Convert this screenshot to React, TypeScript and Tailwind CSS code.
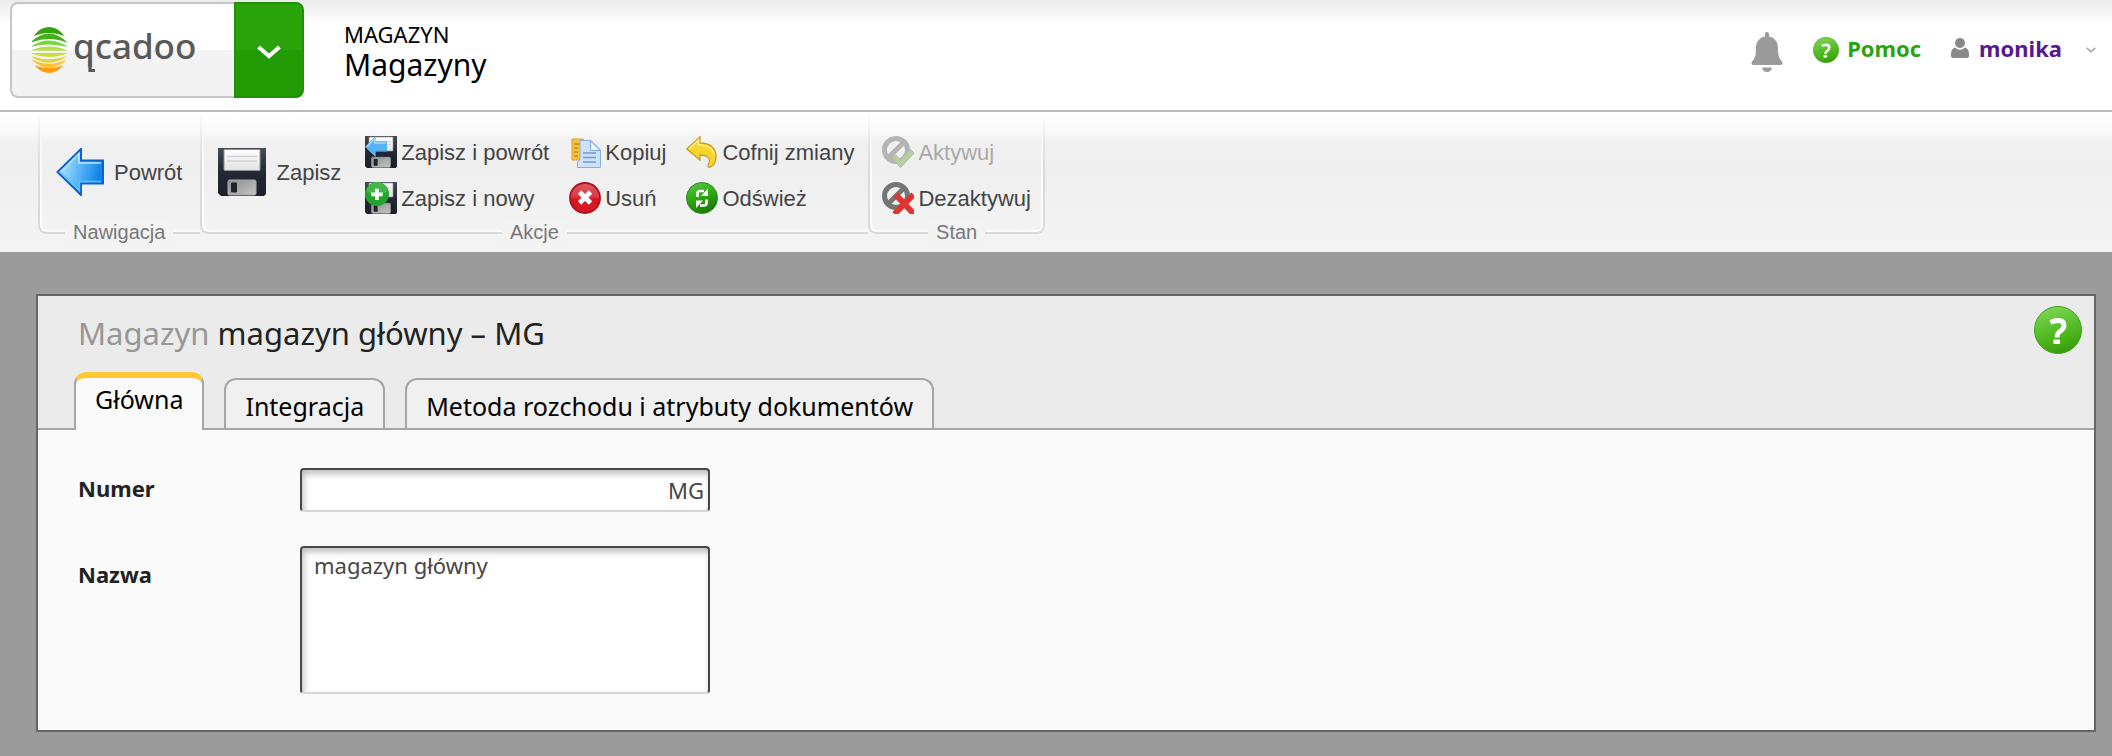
import React from "react";

function LogoMark() {
  return (
    <svg width="176" height="56" viewBox="0 -4 176 56" role="img" aria-label="qcadoo">
      <defs>
        <clipPath id="logo-ball">
          <ellipse cx="17" cy="24" rx="19" ry="23" />
        </clipPath>
      </defs>
      <g clipPath="url(#logo-ball)">
        <path d="M-2 12Q17 -11 36 12Q17 2 -2 12Z" fill="#33a50c" />
        <path d="M-2 17Q17 -2 36 17Q17 9 -2 17Z" fill="#45b01c" />
        <path d="M-2 21Q17 8 36 21Q17 16 -2 21Z" fill="#74d83a" />
        <path d="M-2 24.500Q17 16.500 36 24.500Q17 25 -2 24.500Z" fill="#b5e04a" />
        <path d="M-2 27Q17 27 36 27Q17 35 -2 27Z" fill="#c9dc3e" />
        <path d="M-2 29.500Q17 37 36 29.500Q17 44 -2 29.500Z" fill="#dcd53c" />
        <path d="M-2 32.500Q17 43 36 32.500Q17 51 -2 32.500Z" fill="#ffc02e" />
        <path d="M-2 37Q17 47 36 37Q17 61 -2 37Z" fill="#ff9a12" />
      </g>
      <text x="41" y="33" fontFamily="'Noto Sans', sans-serif" fontSize="35" fontWeight="500" fill="#595959">qcadoo</text>
      <path d="M58 34V44.500H63" fill="none" stroke="#595959" strokeWidth="3.200" />
    </svg>
  );
}

function HelpIcon({ className }: { className: string }) {
  return (
    <svg className={className} viewBox="0 0 48 48" aria-hidden="true">
      <defs>
        <linearGradient id="help-fill" x1="0.3" y1="0" x2="0.6" y2="1">
          <stop offset="0" stopColor="#7fd455" />
          <stop offset="0.5" stopColor="#55bd28" />
          <stop offset="0.75" stopColor="#46b014" />
          <stop offset="1" stopColor="#37990c" />
        </linearGradient>
      </defs>
      <circle cx="24" cy="24" r="23.500" fill="url(#help-fill)" stroke="#41a31b" />
      <path d="M16.500 16.500Q20 14.500 24 14.500Q30 14.500 30 19.500Q30 22.500 26.500 25Q23 27 23 31.500" fill="none" stroke="#fff" strokeWidth="4.800" />
      <rect x="19.500" y="33.500" width="6.500" height="4.500" fill="#fff" />
    </svg>
  );
}

function BellIcon() {
  return (
    <svg width="32" height="40" viewBox="0 0 32 40" aria-hidden="true" fill="#9b9b9b">
      <path d="M16 0C17.500 0 18 1 18 2.500V4.600C23.500 5.500 27 10 27 15.500C27 24 28 26 31 29.500C32 31.500 31.500 33 29.500 33H2.500C.5 33 0 31.500 1 29.500C4 26 5 24 5 15.500C5 10 8.500 5.500 14 4.600V2.500C14 1 14.500 0 16 0Z" />
      <path d="M11 35.500H21C20.500 38.500 18.500 40 16 40C13.500 40 11.500 38.500 11 35.500Z" />
    </svg>
  );
}

function UserIcon() {
  return (
    <svg width="18" height="20" viewBox="0 0 18 20" aria-hidden="true" fill="#888">
      <circle cx="9" cy="5" r="5" />
      <path d="M4 9.500Q9 14 14 9.500Q18 11 18 16V18Q18 20 16 20H2Q0 20 0 18V16Q0 11 4 9.500Z" />
    </svg>
  );
}

function BackIcon() {
  return (
    <svg width="48" height="48" viewBox="0 0 48 48" aria-hidden="true">
      <defs>
        <linearGradient id="back-fill" x1="0" y1="0" x2="1" y2="0.25">
          <stop offset="0" stopColor="#d5f3ff" />
          <stop offset="0.5" stopColor="#63bcf8" />
          <stop offset="1" stopColor="#1183ea" />
        </linearGradient>
      </defs>
      <path d="M1.500 24L25 1V12.500H47V35.500H25V47Z" fill="url(#back-fill)" stroke="#0b62d8" strokeWidth="2" />
      <path d="M4.500 24L23 5.500V15H45" fill="none" stroke="#c3eaff" strokeWidth="1.500" />
      <path d="M4.500 24L23.500 42.500V33.500H45" fill="none" stroke="#5cc6fb" strokeWidth="1.300" />
    </svg>
  );
}

function Floppy({ size, children }: { size: "large" | "small"; children?: React.ReactNode }) {
  return (
    <svg className={size === "large" ? "size-12" : "size-8"} viewBox="0 0 48 48" aria-hidden="true">
      <defs>
        <linearGradient id="disk-body" x1="0" y1="0" x2="0" y2="1">
          <stop offset="0" stopColor="#454a55" />
          <stop offset="0.5" stopColor="#232833" />
          <stop offset="1" stopColor="#1c202a" />
        </linearGradient>
        <linearGradient id="disk-label" x1="0" y1="0" x2="0" y2="1">
          <stop offset="0" stopColor="#ffffff" />
          <stop offset="1" stopColor="#e2e2e2" />
        </linearGradient>
        <linearGradient id="disk-metal" x1="0" y1="0" x2="1" y2="1">
          <stop offset="0" stopColor="#8e8e8e" />
          <stop offset="1" stopColor="#c4c4c4" />
        </linearGradient>
      </defs>
      <path d="M0 0H48V46L46 48H3L0 45Z" fill="url(#disk-body)" />
      <rect x="6" y="1.500" width="36" height="21" rx="1" fill="url(#disk-label)" stroke="#8f949c" />
      <path d="M9 8.500H39M9 13H39" stroke="#d2d2d2" strokeWidth="1.500" />
      <rect x="10" y="32" width="28" height="15" rx="1.500" fill="url(#disk-metal)" stroke="#a9a9a9" />
      <rect x="13" y="34.500" width="6" height="10" rx="1" fill="#1f242d" />
      {children}
    </svg>
  );
}

function SaveBackIcon() {
  return (
    <Floppy size="small">
      <path d="M0 16L16 0V8H33V24H16V32Z" fill="#56b4f3" />
      <path d="M3 16L14.500 4V10.500H31" fill="none" stroke="#a4dcfb" strokeWidth="2" />
      <path d="M16 23H33" stroke="#2a86d8" strokeWidth="2" />
    </Floppy>
  );
}

function SaveNewIcon() {
  return (
    <Floppy size="small">
      <circle cx="18" cy="18" r="18" fill="#22a32c" />
      <path d="M2 15A16 15 0 0 1 34 15Q18 22 2 15Z" fill="#45b54a" />
      <path d="M18 10V27M9.500 18.500H26.500" stroke="#fff" strokeWidth="5.500" />
    </Floppy>
  );
}

function CopyIcon() {
  return (
    <svg width="32" height="32" viewBox="0 0 32 32" aria-hidden="true">
      <path d="M3 3H14L18 7V24H3Z" fill="#f6c33c" stroke="#dd9d2c" />
      <path d="M5 8H10M5 12H9M5 16H9M5 20H9" stroke="#c88a1c" strokeWidth="1.500" />
      <path d="M11 4.500H22L31.500 14V31.500H8.500V26L11 23Z" fill="#cfe1f6" stroke="#8aaedb" />
      <path d="M21.500 5V14.500H31Z" fill="#f2f8ff" stroke="#7fa8d8" />
      <path d="M14 17H27M14 21.500H27M14 26H27" stroke="#6d9ad0" strokeWidth="1.700" />
    </svg>
  );
}

function DeleteIcon() {
  return (
    <svg width="32" height="32" viewBox="0 0 32 32" aria-hidden="true">
      <defs>
        <linearGradient id="delete-fill" x1="0" y1="0" x2="0" y2="1">
          <stop offset="0" stopColor="#dc5a60" />
          <stop offset="0.45" stopColor="#dc3a42" />
          <stop offset="0.55" stopColor="#d5151f" />
          <stop offset="1" stopColor="#d81a24" />
        </linearGradient>
      </defs>
      <circle cx="16" cy="16" r="15" fill="url(#delete-fill)" stroke="#b01019" strokeWidth="1.800" />
      <path d="M10.500 10L21.500 21M21.500 10L10.500 21" stroke="#fff" strokeWidth="4.800" />
    </svg>
  );
}

function UndoIcon() {
  return (
    <svg width="32" height="32" viewBox="0 0 32 32" aria-hidden="true">
      <path d="M.8 13L14 .8V7C24 7 30 12 30 20C30 26 28 30 23.500 31.300C21.500 31.300 21.500 29.500 23 27C25 22 21 19 14 19V24Z" fill="#f6d52f" stroke="#cf9c20" strokeWidth="1.300" />
      <path d="M3 13L12.500 4V9C21 9 27 12 28 19" fill="none" stroke="#fbef8e" strokeWidth="1.500" />
    </svg>
  );
}

function RefreshIcon() {
  return (
    <svg width="32" height="32" viewBox="0 0 32 32" aria-hidden="true">
      <defs>
        <linearGradient id="refresh-fill" x1="0" y1="0" x2="0.4" y2="1">
          <stop offset="0" stopColor="#5fc956" />
          <stop offset="0.5" stopColor="#2fae14" />
          <stop offset="1" stopColor="#1d7c0a" />
        </linearGradient>
      </defs>
      <circle cx="16" cy="16" r="15.500" fill="url(#refresh-fill)" stroke="#2b8a1e" />
      <path d="M11.500 15V11.500Q11.500 9 14 9H18" fill="none" stroke="#fff" strokeWidth="2.600" />
      <path d="M22 6.500V14H15Z" fill="#fff" />
      <path d="M20.500 17.500V21Q20.500 23.500 18 23.500H14" fill="none" stroke="#fff" strokeWidth="2.600" />
      <path d="M10 26V18.500H17Z" fill="#fff" />
    </svg>
  );
}

function ActivateIcon() {
  return (
    <svg width="32" height="32" viewBox="0 0 32 32" aria-hidden="true">
      <circle cx="14" cy="14" r="11.500" fill="none" stroke="#b4b4b4" strokeWidth="5" />
      <path d="M7 21L21 7" stroke="#b4b4b4" strokeWidth="5" />
      <path d="M10 22L13.500 19L18.500 23.500L28.500 13.500L32 17L18.500 31.500Z" fill="#b9cfa2" stroke="#aac193" />
    </svg>
  );
}

function DeactivateIcon() {
  return (
    <svg width="32" height="32" viewBox="0 0 32 32" aria-hidden="true">
      <circle cx="14" cy="14" r="11.500" fill="none" stroke="#757575" strokeWidth="5" />
      <path d="M7 21L21 7" stroke="#757575" strokeWidth="5" />
      <path d="M13.500 12.500L32 32M31.500 12.500L12.500 32" stroke="#e0342f" strokeWidth="6" />
    </svg>
  );
}

function Chevron({ className }: { className: string }) {
  return (
    <svg className={className} viewBox="0 0 24 14" fill="none" stroke="currentColor" strokeWidth="4" aria-hidden="true">
      <path d="M1.500 2L12 11L22.500 2" />
    </svg>
  );
}

type Action = { label: string; icon: React.ReactNode; disabled?: boolean };

function LargeAction({ label, icon }: Action) {
  return (
    <button type="button" className="mx-1 flex items-center gap-[10px] self-start py-3 whitespace-nowrap">
      {icon}
      {label}
    </button>
  );
}

function ActionColumn({ actions }: { actions: Action[] }) {
  return (
    <div className="flex flex-col gap-[14px]">
      {actions.map((action) => (
        <button
          key={action.label}
          type="button"
          disabled={action.disabled}
          className="flex h-8 items-center gap-1 whitespace-nowrap disabled:text-[#a9a9a9]"
        >
          {action.icon}
          {action.label}
        </button>
      ))}
    </div>
  );
}

function ToolbarGroup({ title, last, children }: { title: string; last?: boolean; children: React.ReactNode }) {
  return (
    <section aria-label={title} className="grid">
      <div
        className={
          "col-start-1 row-start-1 mb-3 border-b-2 border-l-2 border-[#d9d9d9] [mask-image:linear-gradient(to_bottom,transparent,black_50%)]" +
          (last
            ? " rounded-b-lg border-r-2 shadow-[inset_2px_-2px_0_#fcfcfc,inset_-2px_0_0_#fcfcfc]"
            : " rounded-bl-lg shadow-[inset_2px_-2px_0_#fcfcfc]")
        }
      />
      <div className="z-10 col-start-1 row-start-1 flex flex-col">
        <div className="flex items-start gap-5 px-[14px] pt-6">{children}</div>
        <h2 className="mt-auto self-center bg-[#f3f3f3] px-2 text-xl leading-7 text-[#777]">{title}</h2>
      </div>
    </section>
  );
}

const tabBase = "rounded-t-xl border-2 border-b-0 border-[#a6a6a6] px-[19px] text-[25px] leading-8 text-black";

const fieldBase =
  "w-[410px] rounded border-2 border-[#474747] border-b-[#d6d6d6] bg-white text-[22px] text-[#474747] shadow-[inset_2px_4px_6px_rgba(0,0,0,0.25)] outline-none";

export default function App() {
  return (
    <div className="flex min-h-screen flex-col bg-[#9b9b9b] font-['Noto_Sans',sans-serif]">
      <header className="flex items-start justify-between border-b-2 border-[#bcbcbc] bg-[linear-gradient(#ececec,#fff_24px)] pr-4 pl-[10px]">
        <div className="flex items-center gap-10 pt-[2px] pb-3">
          <div className="flex h-24">
            <a
              href="#"
              className="flex w-56 items-center rounded-l-lg border-2 border-r-0 border-[#c6c6c6] bg-[linear-gradient(#fff_50%,#f3f3f3_50%)] pl-5"
            >
              <LogoMark />
            </a>
            <button
              type="button"
              aria-label="Menu"
              className="flex w-[70px] items-center justify-center rounded-r-lg border-2 border-[#209005] bg-[linear-gradient(#2ba40b_50%,#229a03_50%)] text-white"
            >
              <Chevron className="mt-1 w-6" />
            </button>
          </div>
          <div className="text-black">
            <p className="text-[22px] leading-[30px]">MAGAZYN</p>
            <h1 className="text-3xl leading-8">Magazyny</h1>
          </div>
        </div>
        <div className="flex h-24 items-center text-[22px] font-bold">
          <button type="button" aria-label="Powiadomienia" className="mr-[30px] pt-2">
            <BellIcon />
          </button>
          <a href="#" className="mr-[30px] flex items-center gap-2 text-[#2ba30f]">
            <HelpIcon className="mt-1 size-[26px]" />
            Pomoc
          </a>
          <button type="button" className="flex items-center text-[#551a8b]">
            <UserIcon />
            <span className="mr-6 ml-[10px]">monika</span>
            <Chevron className="mt-1 w-[10px] text-[#ababab]" />
          </button>
        </div>
      </header>

      <nav
        aria-label="Akcje"
        className="flex bg-[linear-gradient(#fff,#f9f9f9_20px,#f0f0f0_32px,#efefef_60px,#f4f4f4)] pb-[6px] pl-[38px] font-['Liberation_Sans',sans-serif] text-[22px] text-[#444]"
      >
        <ToolbarGroup title="Nawigacja">
          <LargeAction label="Powrót" icon={<BackIcon />} />
        </ToolbarGroup>
        <ToolbarGroup title="Akcje">
          <LargeAction label="Zapisz" icon={<Floppy size="large" />} />
          <ActionColumn
            actions={[
              { label: "Zapisz i powrót", icon: <SaveBackIcon /> },
              { label: "Zapisz i nowy", icon: <SaveNewIcon /> },
            ]}
          />
          <ActionColumn
            actions={[
              { label: "Kopiuj", icon: <CopyIcon /> },
              { label: "Usuń", icon: <DeleteIcon /> },
            ]}
          />
          <ActionColumn
            actions={[
              { label: "Cofnij zmiany", icon: <UndoIcon /> },
              { label: "Odśwież", icon: <RefreshIcon /> },
            ]}
          />
        </ToolbarGroup>
        <ToolbarGroup title="Stan" last>
          <div className="pb-1">
            <ActionColumn
              actions={[
                { label: "Aktywuj", icon: <ActivateIcon />, disabled: true },
                { label: "Dezaktywuj", icon: <DeactivateIcon /> },
              ]}
            />
          </div>
        </ToolbarGroup>
      </nav>

      <main className="mt-[42px] mr-4 mb-6 ml-9 border-2 border-[#666] bg-[#fafafa]">
        <div className="border-b-2 border-[#a6a6a6] bg-[#ebebeb]">
          <div className="flex items-start justify-between pt-[10px] pr-3 pl-10">
            <h2 className="pt-1 text-[31px] leading-[46px] text-[#222]">
              <span className="text-[#979797]">Magazyn</span> magazyn główny – MG
            </h2>
            <button type="button" aria-label="Pomoc" className="pb-1">
              <HelpIcon className="size-12" />
            </button>
          </div>
          <div role="tablist" className="-mb-[2px] flex items-end gap-5 pt-[14px] pl-9">
            <button
              type="button"
              role="tab"
              aria-selected="true"
              className={tabBase + " h-[58px] border-t-[6px] border-t-[#ffc834] bg-[#fafafa] pb-[10px]"}
            >
              Główna
            </button>
            <button type="button" role="tab" aria-selected="false" className={tabBase + " mb-[2px] h-[50px] bg-[#f0f0f0] pt-1"}>
              Integracja
            </button>
            <button type="button" role="tab" aria-selected="false" className={tabBase + " mb-[2px] h-[50px] bg-[#f0f0f0] pt-1"}>
              Metoda rozchodu i atrybuty dokumentów
            </button>
          </div>
        </div>

        <form className="grid grid-cols-[222px_410px] items-start gap-y-[34px] pt-[38px] pb-9 pl-10 text-[22px] text-[#222]">
          <label htmlFor="number" className="leading-[40px] font-bold">
            Numer
          </label>
          <input id="number" type="text" defaultValue="MG" className={fieldBase + " h-11 px-1 text-right"} />
          <label htmlFor="name" className="pt-2 leading-[40px] font-bold">
            Nazwa
          </label>
          <textarea
            id="name"
            defaultValue="magazyn główny"
            className={fieldBase + " block h-[148px] resize-none px-3 py-[2px] leading-[30px]"}
          />
        </form>
      </main>
    </div>
  );
}
